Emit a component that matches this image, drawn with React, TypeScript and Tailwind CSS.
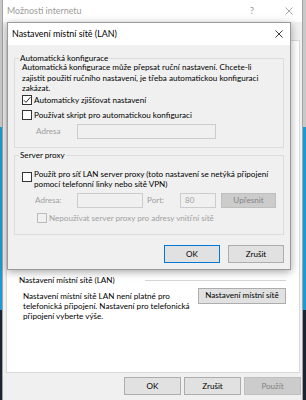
import React from "react";

const font = { fontFamily: "Lato, 'Noto Sans', sans-serif" };

function Check({ checked = false, disabled = false }: { checked?: boolean; disabled?: boolean }) {
  return (
    <span
      className={
        "flex h-[10px] w-[10px] shrink-0 items-center justify-center border " +
        (disabled ? "border-[#bcbcbc] bg-[#f0f0f0]" : "border-[#333333] bg-white")
      }
    >
      {checked && (
        <svg width="8" height="8" viewBox="0 0 8 8">
          <polyline points="0.8,4.2 3,6.4 7.4,1.2" fill="none" stroke="#111" strokeWidth="0.9" />
        </svg>
      )}
    </span>
  );
}

function XIcon({ color, size = 8 }: { color: string; size?: number }) {
  return (
    <svg width={size} height={size} viewBox="0 0 8 8">
      <line x1="0.5" y1="0.5" x2="7.5" y2="7.5" stroke={color} strokeWidth="0.9" />
      <line x1="7.5" y1="0.5" x2="0.5" y2="7.5" stroke={color} strokeWidth="0.9" />
    </svg>
  );
}

function Btn({
  children,
  className = "",
  disabled = false,
  primary = false,
}: {
  children: React.ReactNode;
  className?: string;
  disabled?: boolean;
  primary?: boolean;
}) {
  return (
    <div
      className={
        "flex items-center justify-center whitespace-nowrap border text-[8.1px] " +
        (disabled
          ? "border-[#bfbfbf] bg-[#cccccc] text-[#838383] "
          : primary
          ? "border-[#0078d7] bg-[#e1e1e1] text-black "
          : "border-[#adadad] bg-[#e1e1e1] text-black ") +
        className
      }
    >
      {children}
    </div>
  );
}

export default function App() {
  return (
    <div
      className="relative h-[400px] w-[306px] overflow-hidden bg-[linear-gradient(to_bottom,#c9c9c9_0px,#c9c9c9_127px,#1a9ad6_127px,#1a9ad6_310px,#1c2433_310px)] text-[8.1px] leading-[10.5px] text-black"
      style={font}
    >
      {/* Outer window */}
      <div className="ml-[2px] flex h-[400px] w-[301px] flex-col border-x border-[#a3a3a3] bg-[#f0f0f0]">
        <div className="flex h-[22px] items-center bg-white pl-[4px] pr-[9px]">
          <span className="text-[8.9px] text-[#9b9b9b]">Možnosti internetu</span>
          <span className="ml-auto mr-[31px] text-[9.5px] text-[#9b9b9b]">?</span>
          <XIcon color="#9b9b9b" />
        </div>
        <div className="ml-[3px] mr-[2px] mt-[18px] h-[333px] border border-[#d9d9d9] bg-white pl-[12px] pr-[13px] pt-[234px]">
          <div className="flex items-center">
            <span>Nastavení místní sítě (LAN)</span>
            <div className="ml-[30px] h-px flex-1 bg-[#d5d5d5]" />
          </div>
          <div className="mt-[2px] flex items-start justify-between">
            <p className="ml-[4px] whitespace-nowrap pt-[3px] leading-[10px]">
              Nastavení místní sítě LAN není platné pro
              <br />
              telefonická připojení. Nastavení pro telefonická
              <br />
              připojení vyberte výše.
            </p>
            <Btn className="h-[16px] w-[88px]">Nastavení místní sítě</Btn>
          </div>
        </div>
        <div className="mt-[4px] flex justify-end gap-[3px] pr-[1px]">
          <Btn className="h-[18px] w-[57px]">OK</Btn>
          <Btn className="h-[18px] w-[57px]">Zrušit</Btn>
          <Btn className="h-[18px] w-[57px]" disabled>
            Použít
          </Btn>
        </div>
      </div>

      {/* Inner dialog */}
      <div className="absolute left-[7px] top-[22px] flex h-[248px] w-[284px] flex-col border border-[#9a9a9a] bg-[#f0f0f0] shadow-[0_2px_8px_rgba(0,0,0,0.35)]">
        <div className="flex h-[22px] shrink-0 items-center bg-white pl-[4px] pr-[7px]">
          <span className="text-[8.9px]">Nastavení místní sítě (LAN)</span>
          <span className="ml-auto">
            <XIcon color="#222" />
          </span>
        </div>

        {/* Group 1 */}
        <div className="relative mx-[6px] mt-[13px] h-[90px] border border-[#dcdcdc] px-[7px] pt-[3px]">
          <span className="absolute left-[4px] top-[-6px] bg-[#f0f0f0] px-px leading-[10px]">
            Automatická konfigurace
          </span>
          <p className="whitespace-nowrap leading-[10.5px]">
            Automatická konfigurace může přepsat ruční nastavení. Chcete-li
            <br />
            zajistit použití ručního nastavení, je třeba automatickou konfiguraci
            <br />
            zakázat.
          </p>
          <div className="mt-[1px] flex h-[11px] items-center gap-[2px]">
            <Check checked />
            <span>Automaticky zjišťovat nastavení</span>
          </div>
          <div className="mt-[4px] flex h-[11px] items-center gap-[2px]">
            <Check />
            <span>Používat skript pro automatickou konfiguraci</span>
          </div>
          <div className="mt-[3px] flex items-center text-[#a0a0a0]">
            <span className="ml-[14px] w-[41px]">Adresa</span>
            <div className="h-[15px] w-[139px] border border-[#cccccc]" />
          </div>
        </div>

        {/* Group 2 */}
        <div className="relative mx-[6px] mt-[7px] h-[80px] border border-[#dcdcdc] px-[7px] pt-[13px]">
          <span className="absolute left-[4px] top-[-6px] bg-[#f0f0f0] px-px leading-[10px]">Server proxy</span>
          <div className="flex items-start gap-[2px] leading-[10px]">
            <span className="mt-[3px]">
              <Check />
            </span>
            <span className="whitespace-nowrap">
              Použít pro síť LAN server proxy (toto nastavení se netýká připojení
              <br />
              pomocí telefonní linky nebo sítě VPN)
            </span>
          </div>
          <div className="mt-[4px] flex items-center text-[#a0a0a0]">
            <span className="ml-[13px] w-[42px]">Adresa:</span>
            <div className="h-[15px] w-[66px] border border-[#cccccc]" />
            <span className="ml-[4px] w-[33px]">Port:</span>
            <div className="flex h-[15px] w-[36px] items-center border border-[#cccccc] pl-[4px]">80</div>
            <Btn className="ml-[5px] h-[15px] w-[55px]" disabled>
              Upřesnit
            </Btn>
          </div>
          <div className="mt-[5px] flex items-center gap-[2px] pl-[15px] text-[#a0a0a0]">
            <Check disabled />
            <span>Nepoužívat server proxy pro adresy vnitřní sítě</span>
          </div>
        </div>

        <div className="mr-[6px] mt-[10px] flex justify-end gap-[8px]">
          <Btn className="h-[18px] w-[56px]" primary>
            OK
          </Btn>
          <Btn className="h-[18px] w-[56px]">Zrušit</Btn>
        </div>
      </div>
    </div>
  );
}
